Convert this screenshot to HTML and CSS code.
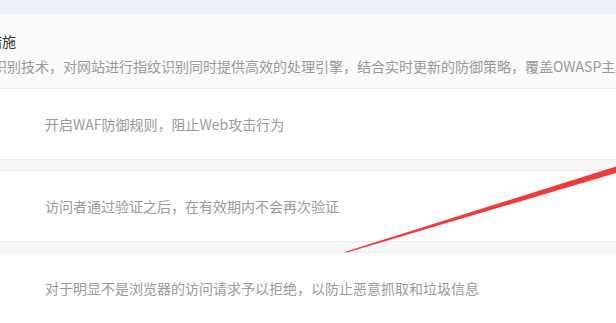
FILE: index.html
```html
<!DOCTYPE html>
<html lang="zh-CN">
<head>
    <meta charset="UTF-8">
    <meta name="viewport" content="width=device-width, initial-scale=1.0">
    <title>WAF防护</title>
    <link rel="stylesheet" href="styles.css">
</head>
<body>
    <!-- 顶部条 -->
    <div class="topbar"></div>

    <!-- 说明区域 -->
    <div class="intro">
        <div class="intro-title">措施</div>
        <div class="intro-desc">识别技术，对网站进行指纹识别同时提供高效的处理引擎，结合实时更新的防御策略，覆盖OWASP主要安全威胁</div>
    </div>

    <!-- 设置列表 -->
    <div class="setting-row">
        <span class="setting-text">开启WAF防御规则，阻止Web攻击行为</span>
    </div>
    <div class="row-gap"></div>
    <div class="setting-row">
        <span class="setting-text">访问者通过验证之后，在有效期内不会再次验证</span>
    </div>
    <div class="row-gap"></div>
    <div class="setting-row">
        <span class="setting-text">对于明显不是浏览器的访问请求予以拒绝，以防止恶意抓取和垃圾信息</span>
    </div>

    <!-- 标注箭头 -->
    <svg class="mark" width="616" height="323" viewBox="0 0 616 323">
        <polygon points="346,251.5 616,166.5 616,173 347,252.5" fill="#f23a3a"/>
    </svg>
</body>
</html>
```

FILE: styles.css
```css
/* 基础样式 */
body {
    margin: 0;
    padding: 0;
    width: 616px;
    height: 323px;
    overflow: hidden;
    position: relative;
    background-color: #fff;
    font-family: "Noto Sans CJK SC", "Microsoft YaHei", sans-serif;
    font-size: 14px;
    line-height: 20px;
}

/* 顶部条 */
.topbar {
    height: 14px;
    background-color: #e8f2fb;
}

/* 说明区域 */
.intro {
    height: 75px;
    padding-top: 17px;
    box-sizing: border-box;
    background-color: #fafafa;
    border-bottom: 1px solid #ebebeb;
    white-space: nowrap;
}

.intro-title {
    margin-left: -12px;
    color: #333;
}

.intro-desc {
    margin-top: 5px;
    margin-left: -7px;
    color: #999;
}

/* 设置列表 */
.setting-row {
    height: 70px;
    display: flex;
    align-items: center;
    padding-left: 45px;
    background-color: #fff;
    white-space: nowrap;
}

.setting-text {
    color: #9a9a9a;
}

.row-gap {
    height: 10px;
    background-color: #f8f8f8;
    border-top: 1px solid #ebebeb;
    border-bottom: 1px solid #ebebeb;
}

/* 标注 */
.mark {
    position: absolute;
    left: 0;
    top: 0;
}
```
